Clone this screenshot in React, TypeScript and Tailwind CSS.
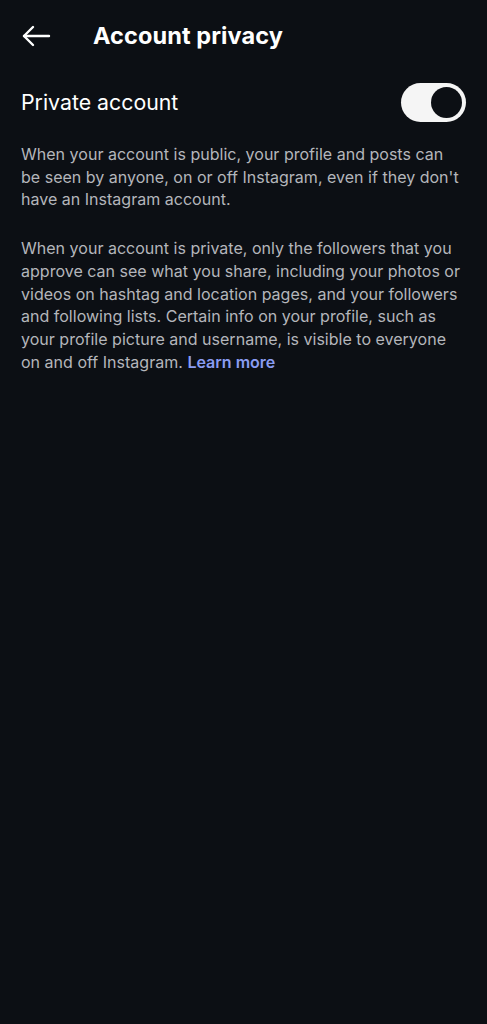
import React from "react";

export default function App() {
  return (
    <div className="min-h-[1024px] w-full bg-[#0c0f14] text-white" style={{ fontFamily: "Inter, 'Noto Sans', sans-serif" }}>
      <div className="flex h-[72px] items-center pl-[21px]">
        <svg width="30" height="22" viewBox="0 0 30 22" fill="none" stroke="white" strokeWidth="2.4" strokeLinecap="round" strokeLinejoin="round">
          <path d="M28 11H3" />
          <path d="M12 2L3 11l9 9" />
        </svg>
        <div className="ml-[42px] text-[23.5px] font-bold tracking-[0.1px]">Account privacy</div>
      </div>
      <div className="flex items-center justify-between pl-[21px] pr-[21px] pt-[11px]">
        <div className="text-[21.3px] font-normal">Private account</div>
        <div className="flex h-[39px] w-[65px] items-center justify-end rounded-full bg-[#f5f5f5] pr-[4px]">
          <div className="h-[31px] w-[31px] rounded-full bg-[#0c0f14]" />
        </div>
      </div>
      <div className="pl-[21px] pr-[25px] pt-[21px] text-[16.05px] leading-[22.7px] text-[#b4b6bb]">
        <p>When your account is public, your profile and posts can be seen by anyone, on or off Instagram, even if they don't have an Instagram account.</p>
        <p className="mt-[26px]">
          When your account is private, only the followers that you approve can see what you share, including your photos or videos on hashtag and location pages, and your followers and following lists. Certain info on your profile, such as your profile picture and username, is visible to everyone on and off Instagram.{" "}
          <span className="font-semibold text-[#8a9cf2]">Learn more</span>
        </p>
      </div>
    </div>
  );
}
